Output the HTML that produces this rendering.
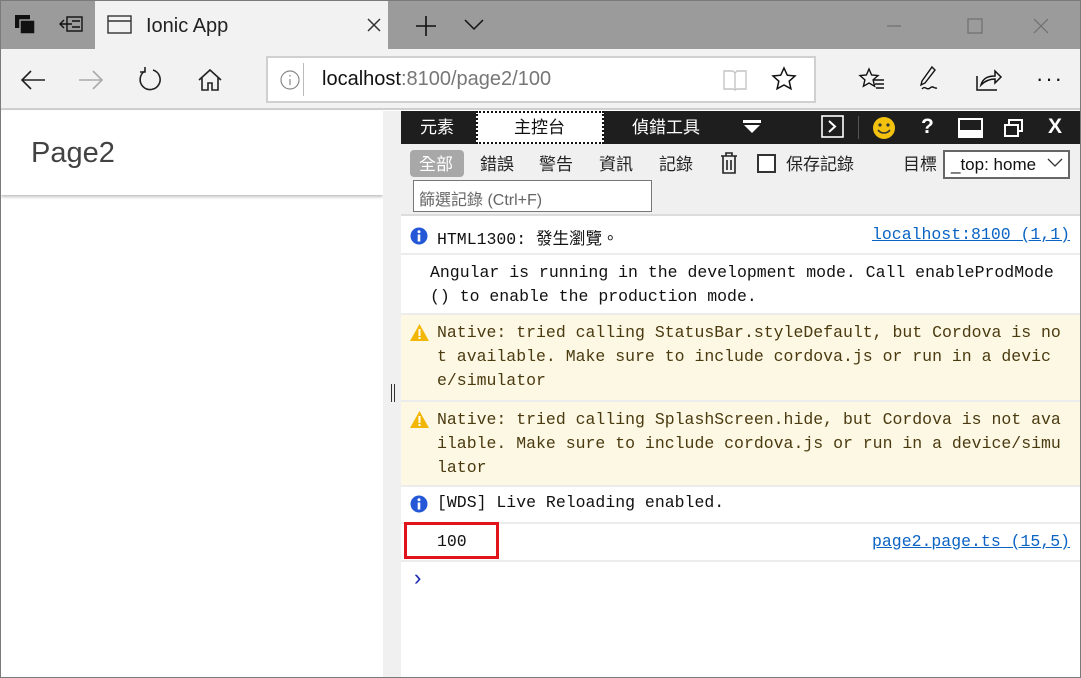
<!DOCTYPE html>
<html><head><meta charset="utf-8"><style>
*{margin:0;padding:0;box-sizing:border-box}
body{width:1081px;height:678px;overflow:hidden;background:#fff;font-family:"Liberation Sans","Noto Sans CJK TC",sans-serif;position:relative}
.a{position:absolute}
.mono{font-family:"Liberation Mono","Noto Sans CJK TC",monospace;font-size:16.5px;color:#111}
.cjk{font-family:"Liberation Sans","Noto Sans CJK TC",sans-serif}
a{color:#0b63c4;text-decoration:underline}
</style></head><body>
<div class="a" style="left:0;top:0;width:1081px;height:49px;background:#9b9b9b"></div>
<div class="a" style="left:0;top:0;width:1081px;height:678px;border:1px solid #7a7a7a;z-index:9;pointer-events:none"></div>
<svg class="a" style="left:14px;top:14px" width="24" height="22"><rect x="1" y="1" width="15" height="13" fill="#111"/><rect x="6" y="6" width="15" height="14" fill="#111" stroke="#9b9b9b" stroke-width="1.5"/></svg>
<svg class="a" style="left:59px;top:15px" width="26" height="20" fill="none" stroke="#111" stroke-width="1.4"><rect x="8" y="2" width="15" height="14"/><path d="M1 9h12M5 5l-4 4 4 4M13 6h8M13 12h8"/></svg>
<div class="a" style="left:95px;top:1px;width:293px;height:48px;background:#f2f2f2"></div>
<svg class="a" style="left:107px;top:15px" width="26" height="20" fill="none" stroke="#333" stroke-width="1.4"><rect x="1" y="1" width="23" height="17"/><path d="M1 6h23"/></svg>
<div class="a" style="left:146px;top:15px;font-size:20px;color:#222">Ionic App</div>
<svg class="a" style="left:366px;top:17px" width="16" height="16" stroke="#333" stroke-width="1.5"><path d="M2 2l12 12M14 2L2 14"/></svg>
<svg class="a" style="left:415px;top:15px" width="22" height="22" stroke="#111" stroke-width="1.6"><path d="M11 1v20M1 11h20"/></svg>
<svg class="a" style="left:463px;top:18px" width="22" height="14" fill="none" stroke="#111" stroke-width="1.5"><path d="M2 2l9 9 9-9"/></svg>
<svg class="a" style="left:885px;top:18px" width="180" height="16" fill="none" stroke="#6e6e6e" stroke-width="1.2"><path d="M2 8h14"/><rect x="83" y="1" width="14" height="14"/><path d="M149 1l14 14M163 1l-14 14"/></svg>
<div class="a" style="left:0;top:49px;width:1081px;height:61px;background:#f2f2f2;border-bottom:2px solid #cfcfcf"></div>
<svg class="a" style="left:19px;top:68px" width="28" height="24" fill="none" stroke="#222" stroke-width="1.6"><path d="M26 12H3M12 3l-9 9 9 9"/></svg>
<svg class="a" style="left:77px;top:68px" width="28" height="24" fill="none" stroke="#aaa" stroke-width="1.6"><path d="M2 12h23M16 3l9 9-9 9"/></svg>
<svg class="a" style="left:137px;top:66px" width="26" height="28" fill="none" stroke="#222" stroke-width="1.6"><path d="M8 5A10 10 0 1 0 16 4"/><path d="M8 1v5h-5"/></svg>
<svg class="a" style="left:197px;top:68px" width="26" height="24" fill="none" stroke="#222" stroke-width="1.6"><path d="M2 12L13 2l11 10M5 10v12h6v-7h4v7h6V10"/></svg>
<div class="a" style="left:266px;top:56px;width:550px;height:47px;background:#fff;border:2px solid #d0d0d0"></div>
<svg class="a" style="left:279px;top:69px" width="22" height="22" fill="none" stroke="#888" stroke-width="1.2"><circle cx="11" cy="11" r="9"/><path d="M11 10v6M11 6v1.5"/></svg>
<div class="a" style="left:303px;top:63px;width:1px;height:33px;background:#bbb"></div>
<div class="a" style="left:322px;top:68px;font-size:20px;color:#111">localhost<span style="color:#777">:8100/page2/100</span></div>
<svg class="a" style="left:722px;top:68px" width="26" height="24" fill="none" stroke="#c4c4c4" stroke-width="1.4"><path d="M2 3h9l2 2 2-2h9v18h-9l-2 1-2-1H2zM13 5v17"/></svg>
<svg class="a" style="left:771px;top:66px" width="26" height="26" fill="none" stroke="#111" stroke-width="1.5"><path d="M13 2l3.3 7.2 7.7.8-5.8 5.2 1.7 7.6L13 19l-6.9 3.8 1.7-7.6L2 10l7.7-.8z"/></svg>
<svg class="a" style="left:858px;top:67px" width="28" height="26" fill="none" stroke="#111" stroke-width="1.4"><path d="M11 2l2.6 6 6.4.6-4.9 4.3 1.5 6.3L11 16l-5.6 3.2 1.5-6.3L2 8.6l6.4-.6z"/><path d="M16 13h10M17 17h9M18 21h8"/></svg>
<svg class="a" style="left:917px;top:64px" width="30" height="30" fill="none" stroke="#111" stroke-width="1.4"><path d="M15 3l3 3-10 13-4 2 1-4zM5 25c3-4 5 2 8-1s4 1 7 0"/></svg>
<svg class="a" style="left:975px;top:66px" width="28" height="26" fill="none" stroke="#111" stroke-width="1.5"><path d="M2 10v14h20M6 19c2-7 7-9 14-9V5l6 6-6 6v-4c-6 0-10 2-14 6z"/></svg>
<div class="a" style="left:1036px;top:66px;font-size:22px;color:#111;letter-spacing:2px">···</div>
<div class="a" style="left:1px;top:111px;width:382px;height:84px;background:#fff;box-shadow:0 2px 3px rgba(0,0,0,.25)"></div>
<div class="a" style="left:31px;top:137px;font-size:29px;color:#424242">Page2</div>
<div class="a" style="left:383px;top:111px;width:18px;height:567px;background:#f0f0f0"></div>
<div class="a" style="left:391px;top:384px;height:18px;border-left:1px solid #333;border-right:1px solid #333;width:4px"></div>
<div class="a" style="left:401px;top:111px;width:680px;height:33px;background:#1e1e1e"></div>
<div class="a cjk" style="left:420px;top:113px;font-size:17px;color:#fff">元素</div>
<div class="a" style="left:476px;top:111px;width:128px;height:33px;background:#fff;border:2px dotted #111"></div>
<div class="a cjk" style="left:514px;top:113px;font-size:17px;color:#111">主控台</div>
<div class="a cjk" style="left:632px;top:113px;font-size:17px;color:#fff">偵錯工具</div>
<svg class="a" style="left:742px;top:119px" width="20" height="16" fill="#fff"><rect x="1" y="1" width="18" height="3"/><path d="M2 6h16l-8 8z"/></svg>
<svg class="a" style="left:821px;top:115px" width="24" height="24" fill="none" stroke="#fff" stroke-width="2"><rect x="1" y="1" width="21" height="21" stroke-width="1.6"/><path d="M8 6l6 5.5-6 5.5"/></svg>
<div class="a" style="left:858px;top:116px;width:1px;height:23px;background:#555"></div>
<svg class="a" style="left:872px;top:116px" width="24" height="24"><circle cx="12" cy="12" r="11" fill="#f3c20f"/><circle cx="8" cy="9" r="1.6" fill="#333"/><circle cx="16" cy="9" r="1.6" fill="#333"/><path d="M6 14c3 4 9 4 12 0" fill="none" stroke="#333" stroke-width="1.6"/></svg>
<div class="a" style="left:921px;top:115px;font-size:21px;font-weight:bold;color:#fff">?</div>
<svg class="a" style="left:958px;top:118px" width="25" height="20"><rect x="1" y="1" width="23" height="18" fill="none" stroke="#fff" stroke-width="2"/><rect x="1" y="12" width="23" height="7" fill="#fff"/></svg>
<svg class="a" style="left:1003px;top:118px" width="22" height="20" fill="none" stroke="#fff" stroke-width="2"><rect x="2" y="7" width="13" height="11"/><path d="M6 7V2h13v11h-4"/></svg>
<div class="a" style="left:1048px;top:115px;font-size:21px;font-weight:bold;color:#fff">X</div>
<div class="a" style="left:401px;top:144px;width:680px;height:72px;background:#f0f0f0;border-bottom:2px solid #dcdcdc"></div>
<div class="a cjk" style="left:410px;top:150px;width:54px;height:27px;background:#a8a8a8;border-radius:4px;color:#fff;font-size:17px;padding:0 0 0 9px">全部</div>
<div class="a cjk" style="left:480px;top:150px;font-size:17px;color:#222">錯誤</div>
<div class="a cjk" style="left:539px;top:150px;font-size:17px;color:#222">警告</div>
<div class="a cjk" style="left:599px;top:150px;font-size:17px;color:#222">資訊</div>
<div class="a cjk" style="left:659px;top:150px;font-size:17px;color:#222">記錄</div>
<svg class="a" style="left:720px;top:152px" width="18" height="23" fill="none" stroke="#222" stroke-width="1.6"><path d="M1 4h16M6 4V1h6v3M3 4v17h12V4M7 8v10M11 8v10"/></svg>
<div class="a" style="left:757px;top:154px;width:19px;height:19px;border:2px solid #333;background:#fff"></div>
<div class="a cjk" style="left:786px;top:150px;font-size:17px;color:#222">保存記錄</div>
<div class="a cjk" style="left:903px;top:150px;font-size:17px;color:#222">目標</div>
<div class="a" style="left:943px;top:150px;width:127px;height:29px;border:2px solid #666;background:#fff;font-size:17px;color:#111;padding:3px 0 0 6px">_top: home</div>
<svg class="a" style="left:1047px;top:158px" width="16" height="10" fill="none" stroke="#333" stroke-width="1.3"><path d="M1 1l7 7 7-7"/></svg>
<div class="a" style="left:413px;top:180px;width:239px;height:32px;border:1px solid #777;background:#fff;font-size:16px;color:#666;padding:5px 0 0 5px">篩選記錄 (Ctrl+F)</div>
<div class="a" style="left:401px;top:216px;width:680px;height:462px;background:#fff"></div>
<div class="a" style="left:401px;top:253px;width:680px;height:2px;background:#ececec"></div>
<div class="a" style="left:401px;top:313px;width:680px;height:2px;background:#ececec"></div>
<div class="a" style="left:401px;top:315px;width:680px;height:85px;background:#fdf8e4"></div>
<div class="a" style="left:401px;top:400px;width:680px;height:2px;background:#ececec"></div>
<div class="a" style="left:401px;top:402px;width:680px;height:83px;background:#fdf8e4"></div>
<div class="a" style="left:401px;top:485px;width:680px;height:2px;background:#ececec"></div>
<div class="a" style="left:401px;top:522px;width:680px;height:2px;background:#ececec"></div>
<div class="a" style="left:401px;top:560px;width:680px;height:2px;background:#ececec"></div>
<svg class="a" style="left:410px;top:227px" width="20" height="20"><circle cx="9" cy="9" r="8.5" fill="#2458d6"/><rect x="7.7" y="7.5" width="2.6" height="7" fill="#fff"/><circle cx="9" cy="4.8" r="1.5" fill="#fff"/></svg>
<div class="a mono" style="left:437px;top:225px">HTML1300: 發生瀏覽。</div>
<a class="a mono" style="left:872px;top:225px;color:#0b63c4">localhost:8100 (1,1)</a>
<div class="a mono" style="left:430px;top:261px;line-height:24px;width:640px">Angular is running in the development mode. Call enableProdMode<br>() to enable the production mode.</div>
<svg class="a" style="left:410px;top:323px" width="20" height="19"><path d="M9.5 1L19 18H0z" fill="#f2b705"/><rect x="8.5" y="6" width="2" height="7" fill="#fff"/><rect x="8.5" y="14" width="2" height="2" fill="#fff"/></svg>
<div class="a mono" style="left:437px;top:321px;line-height:24px;color:#4a3a10">Native: tried calling StatusBar.styleDefault, but Cordova is no<br>t available. Make sure to include cordova.js or run in a devic<br>e/simulator</div>
<svg class="a" style="left:410px;top:410px" width="20" height="19"><path d="M9.5 1L19 18H0z" fill="#f2b705"/><rect x="8.5" y="6" width="2" height="7" fill="#fff"/><rect x="8.5" y="14" width="2" height="2" fill="#fff"/></svg>
<div class="a mono" style="left:437px;top:408px;line-height:24px;color:#4a3a10">Native: tried calling SplashScreen.hide, but Cordova is not ava<br>ilable. Make sure to include cordova.js or run in a device/simu<br>lator</div>
<svg class="a" style="left:410px;top:495px" width="20" height="20"><circle cx="9" cy="9" r="8.5" fill="#2458d6"/><rect x="7.7" y="7.5" width="2.6" height="7" fill="#fff"/><circle cx="9" cy="4.8" r="1.5" fill="#fff"/></svg>
<div class="a mono" style="left:437px;top:493px">[WDS] Live Reloading enabled.</div>
<div class="a" style="left:404px;top:522px;width:95px;height:37px;border:3px solid #e0141a"></div>
<div class="a mono" style="left:437px;top:532px">100</div>
<a class="a mono" style="left:872px;top:532px;color:#0b63c4">page2.page.ts (15,5)</a>
<div class="a mono" style="left:411px;top:567px;color:#1a2bb0;font-size:22px">›</div>
</body></html>
